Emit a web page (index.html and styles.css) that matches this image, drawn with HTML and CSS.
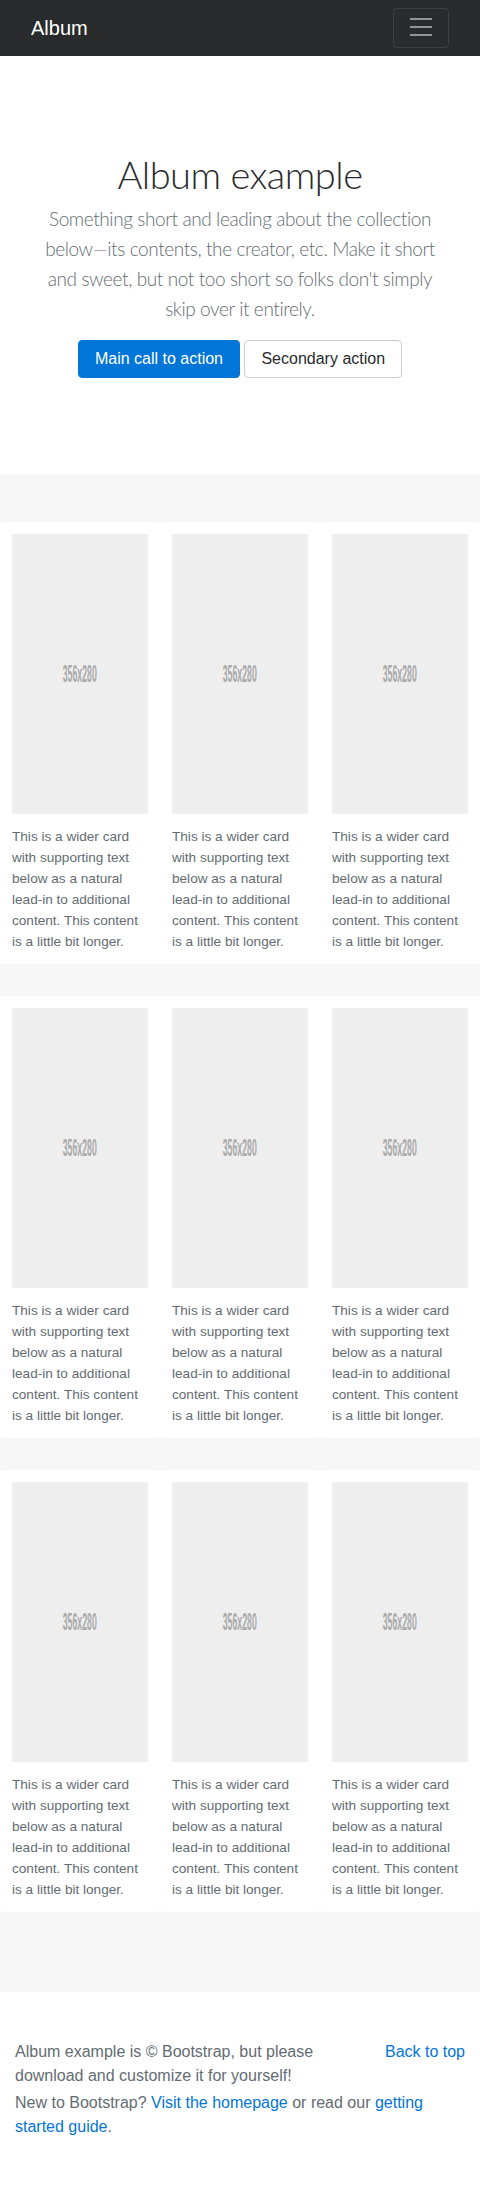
FILE: index.html
```html
<!DOCTYPE html>
<html lang="en">
<head>
<meta charset="utf-8">
<title>Album example</title>
<link rel="stylesheet" href="styles.css">
</head>
<body>
<header class="navbar">
  <div class="nav-inner">
    <a class="brand" href="#">Album</a>
    <button class="toggler" type="button" aria-label="Toggle navigation">
      <svg class="toggler-icon" viewBox="0 0 30 30" width="30" height="30"><path d="M4 7h22M4 15h22M4 23h22" stroke="rgba(255,255,255,0.5)" stroke-width="2" stroke-linecap="butt" fill="none"/></svg>
    </button>
  </div>
</header>

<section class="jumbotron">
  <div class="jumbo-inner">
    <h1 class="jumbo-heading">Album example</h1>
    <p class="lead">Something short and leading about the collection below—its contents, the creator, etc. Make it short and sweet, but not too short so folks don't simply skip over it entirely.</p>
    <p class="actions">
      <a href="#" class="btn btn-primary">Main call to action</a>
      <a href="#" class="btn btn-secondary">Secondary action</a>
    </p>
  </div>
</section>

<main class="album">
  <div class="album-grid">
    <div class="card"><div class="thumb"><span class="thumb-label">356x280</span></div><p class="card-text">This is a wider card with supporting text below as a natural lead-in to additional content. This content is a little bit longer.</p></div>
    <div class="card"><div class="thumb"><span class="thumb-label">356x280</span></div><p class="card-text">This is a wider card with supporting text below as a natural lead-in to additional content. This content is a little bit longer.</p></div>
    <div class="card"><div class="thumb"><span class="thumb-label">356x280</span></div><p class="card-text">This is a wider card with supporting text below as a natural lead-in to additional content. This content is a little bit longer.</p></div>
    <div class="card"><div class="thumb"><span class="thumb-label">356x280</span></div><p class="card-text">This is a wider card with supporting text below as a natural lead-in to additional content. This content is a little bit longer.</p></div>
    <div class="card"><div class="thumb"><span class="thumb-label">356x280</span></div><p class="card-text">This is a wider card with supporting text below as a natural lead-in to additional content. This content is a little bit longer.</p></div>
    <div class="card"><div class="thumb"><span class="thumb-label">356x280</span></div><p class="card-text">This is a wider card with supporting text below as a natural lead-in to additional content. This content is a little bit longer.</p></div>
    <div class="card"><div class="thumb"><span class="thumb-label">356x280</span></div><p class="card-text">This is a wider card with supporting text below as a natural lead-in to additional content. This content is a little bit longer.</p></div>
    <div class="card"><div class="thumb"><span class="thumb-label">356x280</span></div><p class="card-text">This is a wider card with supporting text below as a natural lead-in to additional content. This content is a little bit longer.</p></div>
    <div class="card"><div class="thumb"><span class="thumb-label">356x280</span></div><p class="card-text">This is a wider card with supporting text below as a natural lead-in to additional content. This content is a little bit longer.</p></div>
  </div>
</main>

<footer class="footer">
  <div class="footer-inner">
    <p class="back-top"><a href="#">Back to top</a></p>
    <p>Album example is © Bootstrap, but please download and customize it for yourself!</p>
    <p>New to Bootstrap? <a href="#">Visit the homepage</a> or read our <a href="#">getting started guide</a>.</p>
  </div>
</footer>
</body>
</html>
```

FILE: styles.css
```css
* { box-sizing: border-box; }

html, body {
  margin: 0;
  padding: 0;
}

body {
  font-family: "Liberation Sans", Arial, sans-serif;
  font-size: 16px;
  line-height: 1.5;
  color: #292b2c;
  background: #fff;
}

a { color: #0275d8; text-decoration: none; }

/* Navbar */
.navbar {
  background: #292b2c;
  padding: 8px 16px;
}
.nav-inner {
  display: flex;
  justify-content: space-between;
  align-items: center;
  padding: 0 15px;
}
.brand {
  color: #fff;
  font-size: 20px;
  line-height: 30px;
  padding: 4px 0;
}
.toggler {
  display: flex;
  align-items: center;
  justify-content: center;
  width: 56px;
  height: 40px;
  padding: 0;
  background: transparent;
  border: 1px solid rgba(255, 255, 255, 0.1);
  border-radius: 4px;
}
.toggler-icon {
  display: block;
  margin-top: -2px;
}

/* Jumbotron */
.jumbotron {
  padding: 96px 31px;
  text-align: center;
  background: #fff;
}
.jumbo-inner {
  max-width: 640px;
  margin: 0 auto;
}
.jumbo-heading {
  margin: 0 0 8px;
  font-family: Lato, Roboto, "Liberation Sans", sans-serif;
  font-weight: 300;
  font-size: 38px;
  letter-spacing: -0.5px;
  line-height: 44px;
  color: #292b2c;
}
.lead {
  margin: 0 0 16px;
  font-family: Lato, Roboto, "Liberation Sans", sans-serif;
  font-weight: 300;
  font-size: 19px;
  letter-spacing: -0.4px;
  line-height: 30px;
  color: #636c72;
}
.actions {
  margin: 0;
}
.btn {
  display: inline-block;
  padding: 8px 16px;
  font-size: 16px;
  line-height: 20px;
  border: 1px solid transparent;
  border-radius: 4px;
  vertical-align: middle;
}
.btn-primary {
  background: #0275d8;
  border-color: #0275d8;
  color: #fff;
}
.btn-secondary {
  background: #fff;
  border-color: #cccccc;
  color: #292b2c;
}

/* Album */
.album {
  display: block;
  background: #f7f7f7;
  padding: 48px 0;
}
.album-grid {
  display: grid;
  grid-template-columns: repeat(3, 1fr);
}
.card {
  background: #fff;
  border-radius: 4px;
  padding: 12px;
  margin-bottom: 32px;
}
.thumb {
  display: flex;
  align-items: center;
  justify-content: center;
  height: 280px;
  margin-bottom: 12px;
  background: #eeeeee;
  overflow: hidden;
}
.thumb-label {
  display: inline-block;
  font-family: "Liberation Sans", Arial, sans-serif;
  font-weight: bold;
  font-size: 23px;
  line-height: 1;
  color: #aaaaaa;
  transform: scaleX(0.382);
}
.card-text {
  margin: 0;
  font-size: 13.6px;
  line-height: 21px;
  color: #636c72;
}

/* Footer */
.footer {
  padding: 48px 0;
  color: #636c72;
}
.footer-inner {
  padding: 0 15px;
}
.footer p {
  margin: 0 0 3px;
}
.footer .back-top {
  float: right;
  margin: 0 0 0 16px;
}
```
